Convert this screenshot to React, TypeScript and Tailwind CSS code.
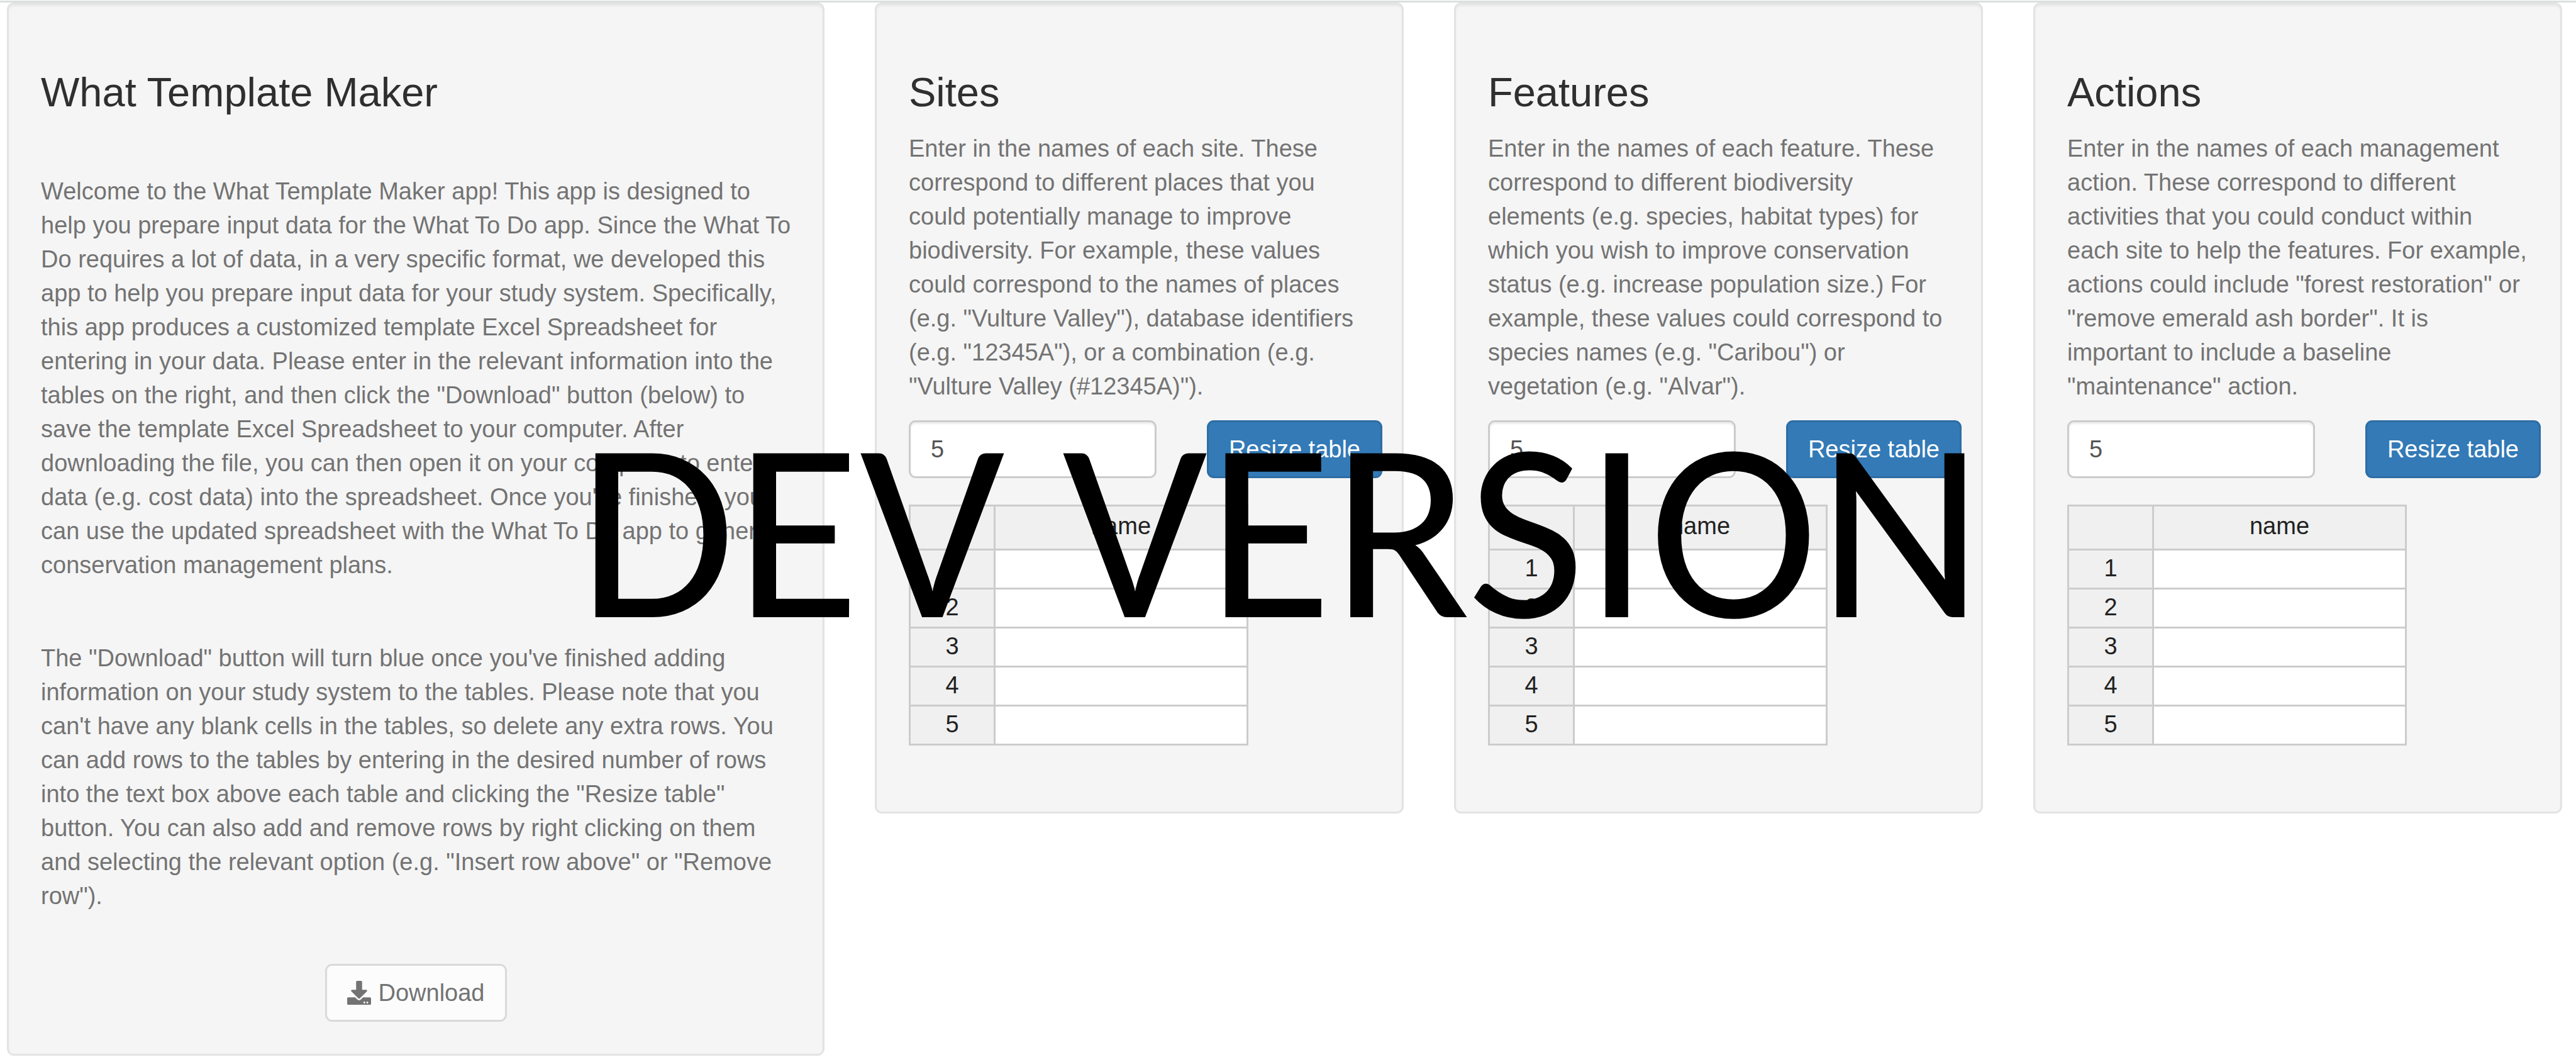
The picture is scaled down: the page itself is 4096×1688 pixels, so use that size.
import { FaDownload } from "react-icons/fa";

type Sheet = { id: string; title: string; text: string };

const sheets: Sheet[] = [
  {
    id: "sites",
    title: "Sites",
    text: 'Enter in the names of each site. These correspond to different places that you could potentially manage to improve biodiversity. For example, these values could correspond to the names of places (e.g. "Vulture Valley"), database identifiers (e.g. "12345A"), or a combination (e.g. "Vulture Valley (#12345A)").',
  },
  {
    id: "features",
    title: "Features",
    text: 'Enter in the names of each feature. These correspond to different biodiversity elements (e.g. species, habitat types) for which you wish to improve conservation status (e.g. increase population size.) For example, these values could correspond to species names (e.g. "Caribou") or vegetation (e.g. "Alvar").',
  },
  {
    id: "actions",
    title: "Actions",
    text: 'Enter in the names of each management action. These correspond to different activities that you could conduct within each site to help the features. For example, actions could include "forest restoration" or "remove emerald ash border". It is important to include a baseline "maintenance" action.',
  },
];

const panel =
  "rounded-[11px] border-[3px] border-[#e3e3e3] bg-[#f5f5f5] p-[51px] shadow-[inset_0_3px_3px_rgba(0,0,0,0.05)]";
const heading = "mt-[53px] text-[65px] leading-[71px] text-[#2f2f2f]";
const button = "rounded-[11px] border-[3px] px-8 text-[38px] leading-[54px] h-[92px]";
const headCell = "border-[3px] border-[#ccc] bg-[#f0f0f0] p-0 text-center align-top font-normal";

function NameTable({ title }: { title: string }) {
  return (
    <table aria-label={title} className="mt-[42px] mb-[54px] w-[540px] table-fixed border-collapse text-[38px] text-[#222]">
      <thead>
        <tr className="h-[70px] leading-[62px]">
          <th className={`${headCell} w-[135px]`}></th>
          <th className={headCell}>name</th>
        </tr>
      </thead>
      <tbody>
        {[1, 2, 3, 4, 5].map((n) => (
          <tr key={n} className="h-[62px] leading-[57px]">
            <th className={headCell}>{n}</th>
            <td className="border-[3px] border-[#ccc] bg-white p-0"></td>
          </tr>
        ))}
      </tbody>
    </table>
  );
}

function SheetPanel({ id, title, text }: Sheet) {
  return (
    <section className={panel}>
      <h3 className={heading}>{title}</h3>
      <p className="mt-[27px]">{text}</p>
      <div className="-mr-5 mt-[27px] flex items-start justify-between">
        <input
          id={id}
          aria-label={`Number of rows for ${title}`}
          defaultValue="5"
          className="h-[92px] w-[394px] rounded-[11px] border-[3px] border-[#ccc] bg-white px-8 text-[38px] text-[#555] shadow-[inset_0_3px_3px_rgba(0,0,0,0.075)]"
        />
        <button className={`${button} border-[#2e6da4] bg-[#337ab7] text-white`}>Resize table</button>
      </div>
      <NameTable title={title} />
    </section>
  );
}

export default function App() {
  return (
    <div className="relative min-h-screen bg-white pt-px font-['Liberation_Sans',Arial,sans-serif] text-[38px] leading-[54px] text-[#737373]">
      <header className="h-[3px] bg-[#dcdfdf]" />
      <main className="grid grid-cols-[1300fr_841fr_841fr_841fr] items-start gap-x-20 pr-[22px] pl-[11px]">
        <section className={panel}>
          <h3 className={heading}>What Template Maker</h3>
          <p className="-mr-2 mt-[95px]">
            Welcome to the What Template Maker app! This app is designed to help you prepare input data for the What To
            Do app. Since the What To Do requires a lot of data, in a very specific format, we developed this app to
            help you prepare input data for your study system. Specifically, this app produces a customized template
            Excel Spreadsheet for entering in your data. Please enter in the relevant information into the tables on the
            right, and then click the "Download" button (below) to save the template Excel Spreadsheet to your computer.
            After downloading the file, you can then open it on your computer to enter data (e.g. cost data) into the
            spreadsheet. Once you've finished, you can use the updated spreadsheet with the What To Do app to generate
            conservation management plans.
          </p>
          <p className="mt-[94px]">
            The "Download" button will turn blue once you've finished adding information on your study system to the
            tables. Please note that you can't have any blank cells in the tables, so delete any extra rows. You can add
            rows to the tables by entering in the desired number of rows into the text box above each table and clicking
            the "Resize table" button. You can also add and remove rows by right clicking on them and selecting the
            relevant option (e.g. "Insert row above" or "Remove row").
          </p>
          <div className="mt-[81px] flex justify-center">
            <button className={`${button} flex items-center gap-3 border-[#d9d9d9] bg-[#fcfcfc] text-[#737373]`}>
              <FaDownload />
              Download
            </button>
          </div>
        </section>
        {sheets.map((s) => (
          <SheetPanel key={s.id} {...s} />
        ))}
      </main>
      <div className="pointer-events-none absolute inset-x-0 top-[602px] pr-6 text-center font-[Carlito,Calibri,Lato,sans-serif] text-[406px] leading-[480px] whitespace-nowrap text-black">
        DEV VERSION
      </div>
    </div>
  );
}
